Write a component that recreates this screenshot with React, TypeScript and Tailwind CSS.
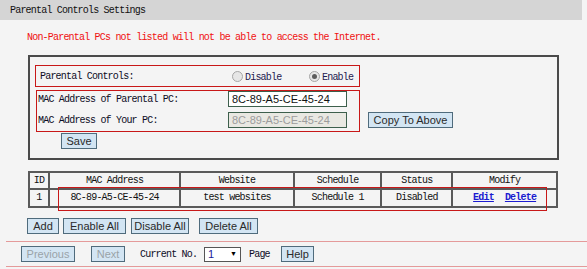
import type { ReactNode } from "react";

const mono = "font-['Liberation_Mono','Courier_New',monospace] text-[10px] tracking-[-0.8px] font-normal";
const sans = "font-['Liberation_Sans',Arial,sans-serif] font-normal tracking-normal";

function Btn({
  children,
  className = "",
  disabled = false,
}: {
  children: ReactNode;
  className?: string;
  disabled?: boolean;
}) {
  return (
    <button
      className={`${sans} h-[16px] border border-[#4f6b7c] bg-[#d3e5f3] text-[11px] leading-none flex items-center justify-center ${
        disabled ? "text-[#9aa3a8]" : "text-[#2a2a2a]"
      } ${className}`}
    >
      {children}
    </button>
  );
}

function Radio({ checked }: { checked?: boolean }) {
  return (
    <span className="w-[11px] h-[11px] rounded-full border border-[#a6a6a6] bg-[#e6e6e6] flex items-center justify-center shrink-0">
      {checked && <span className="w-[5px] h-[5px] rounded-full bg-[#5c5c5c]" />}
    </span>
  );
}

function MacInput({ disabled }: { disabled?: boolean }) {
  return (
    <div
      className={`${sans} w-[119px] h-[16px] border border-[#3d5f4c] px-[3px] text-[11px] leading-none flex items-center ${
        disabled ? "bg-[#e9e8e2] text-[#9c9c9c]" : "bg-white text-[#111]"
      }`}
    >
      8C-89-A5-CE-45-24
    </div>
  );
}

const cols = [
  { label: "ID", w: "w-[20px]", v: "1" },
  { label: "MAC Address", w: "w-[132px]", v: "8C-89-A5-CE-45-24" },
  { label: "Website", w: "w-[114px]", v: "test websites" },
  { label: "Schedule", w: "w-[88px]", v: "Schedule 1" },
  { label: "Status", w: "w-[71px]", v: "Disabled" },
  { label: "Modify", w: "w-[105px]", v: "" },
];

export default function App() {
  return (
    <div className={`w-[587px] h-[269px] bg-[#f4f4f4] overflow-hidden text-[#0c0c24] ${mono}`}>
      <div className="h-[20px] mr-[5px] bg-[#d5d5d5] pl-[10px] flex items-center text-[#111]">
        Parental Controls Settings
      </div>

      <div className="mt-[12px] ml-[27px] h-[12px] leading-[12px] text-[#f01010]">
        Non-Parental PCs not listed will not be able to access the Internet.
      </div>

      <div className="mt-[11px] ml-[28px] w-[531px] border-2 border-[#4a4a4a] pt-[8px] pb-[9px]">
        <div className="ml-[5px] w-[325px] h-[22px] border border-[#c81818] flex items-center pl-[4px]">
          <span className="w-[192px]">Parental Controls:</span>
          <span className="w-[77px] flex items-center gap-[2px] text-[#1e2050]">
            <Radio />
            <span className="mt-[3px]">Disable</span>
          </span>
          <span className="flex items-center gap-[2px] text-[#1e2050]">
            <Radio checked />
            <span className="mt-[3px]">Enable</span>
          </span>
        </div>

        <div className="flex items-end mt-[3px]">
          <div className="ml-[6px] w-[324px] border border-[#c81818] pl-[1px] pb-[3px] flex flex-col gap-[5px]">
            <div className="flex items-center">
              <span className="w-[190px]">MAC Address of Parental PC:</span>
              <MacInput />
            </div>
            <div className="flex items-center">
              <span className="w-[190px]">MAC Address of Your PC:</span>
              <MacInput disabled />
            </div>
          </div>
          <Btn className="ml-[8px] mb-[4px] w-[85px]">Copy To Above</Btn>
        </div>

        <Btn className="ml-[31px] mt-[1px] w-[36px]">Save</Btn>
      </div>

      <div className="relative mt-[11px] ml-[28px] w-[530px]">
        <table className="border-collapse border-2 border-[#555] text-[#111]">
          <tbody>
            <tr className="h-[17px]">
              {cols.map((c) => (
                <td key={c.label} className={`${c.w} border-2 border-[#5a5a5a] text-center p-0 leading-none`}>
                  {c.label}
                </td>
              ))}
            </tr>
            <tr className="h-[18px]">
              {cols.map((c) => (
                <td key={c.label} className={`${c.w} border-2 border-[#5a5a5a] text-center p-0 leading-none`}>
                  {c.label === "Modify" ? (
                    <span className="text-[#1a1ad0] underline font-bold">
                      Edit<span className="ml-[11px]">Delete</span>
                    </span>
                  ) : (
                    c.v
                  )}
                </td>
              ))}
            </tr>
          </tbody>
        </table>
        <div className="absolute left-[30px] top-[16px] w-[489px] h-[24px] border border-[#c81818]" />
      </div>

      <div className="mt-[10px] ml-[27px] flex">
        <Btn className="w-[32px]">Add</Btn>
        <Btn className="ml-[4px] w-[63px]">Enable All</Btn>
        <Btn className="ml-[5px] w-[58px]">Disable All</Btn>
        <Btn className="ml-[10px] w-[59px]">Delete All</Btn>
      </div>

      <div className="mt-[7px] ml-[6px] border-t border-[#e49a9a]" />

      <div className="mt-[4px] ml-[21px] flex items-center h-[16px]">
        <Btn disabled className="w-[54px] h-[15px]">Previous</Btn>
        <Btn disabled className="ml-[16px] w-[34px] h-[15px]">Next</Btn>
        <span className="ml-[15px] w-[64px]">Current No.</span>
        <span className={`${sans} w-[37px] h-[15px] border border-[#555] bg-white flex items-center justify-between px-[3px] text-[11px] text-[#1a1a9a]`}>
          1<span className="text-[7px] text-black">▼</span>
        </span>
        <span className="ml-[8px] w-[32px]">Page</span>
        <Btn className="w-[33px] h-[15px]">Help</Btn>
      </div>

      <div className="mt-[4px] ml-[6px] border-t border-[#e49a9a]" />
    </div>
  );
}
